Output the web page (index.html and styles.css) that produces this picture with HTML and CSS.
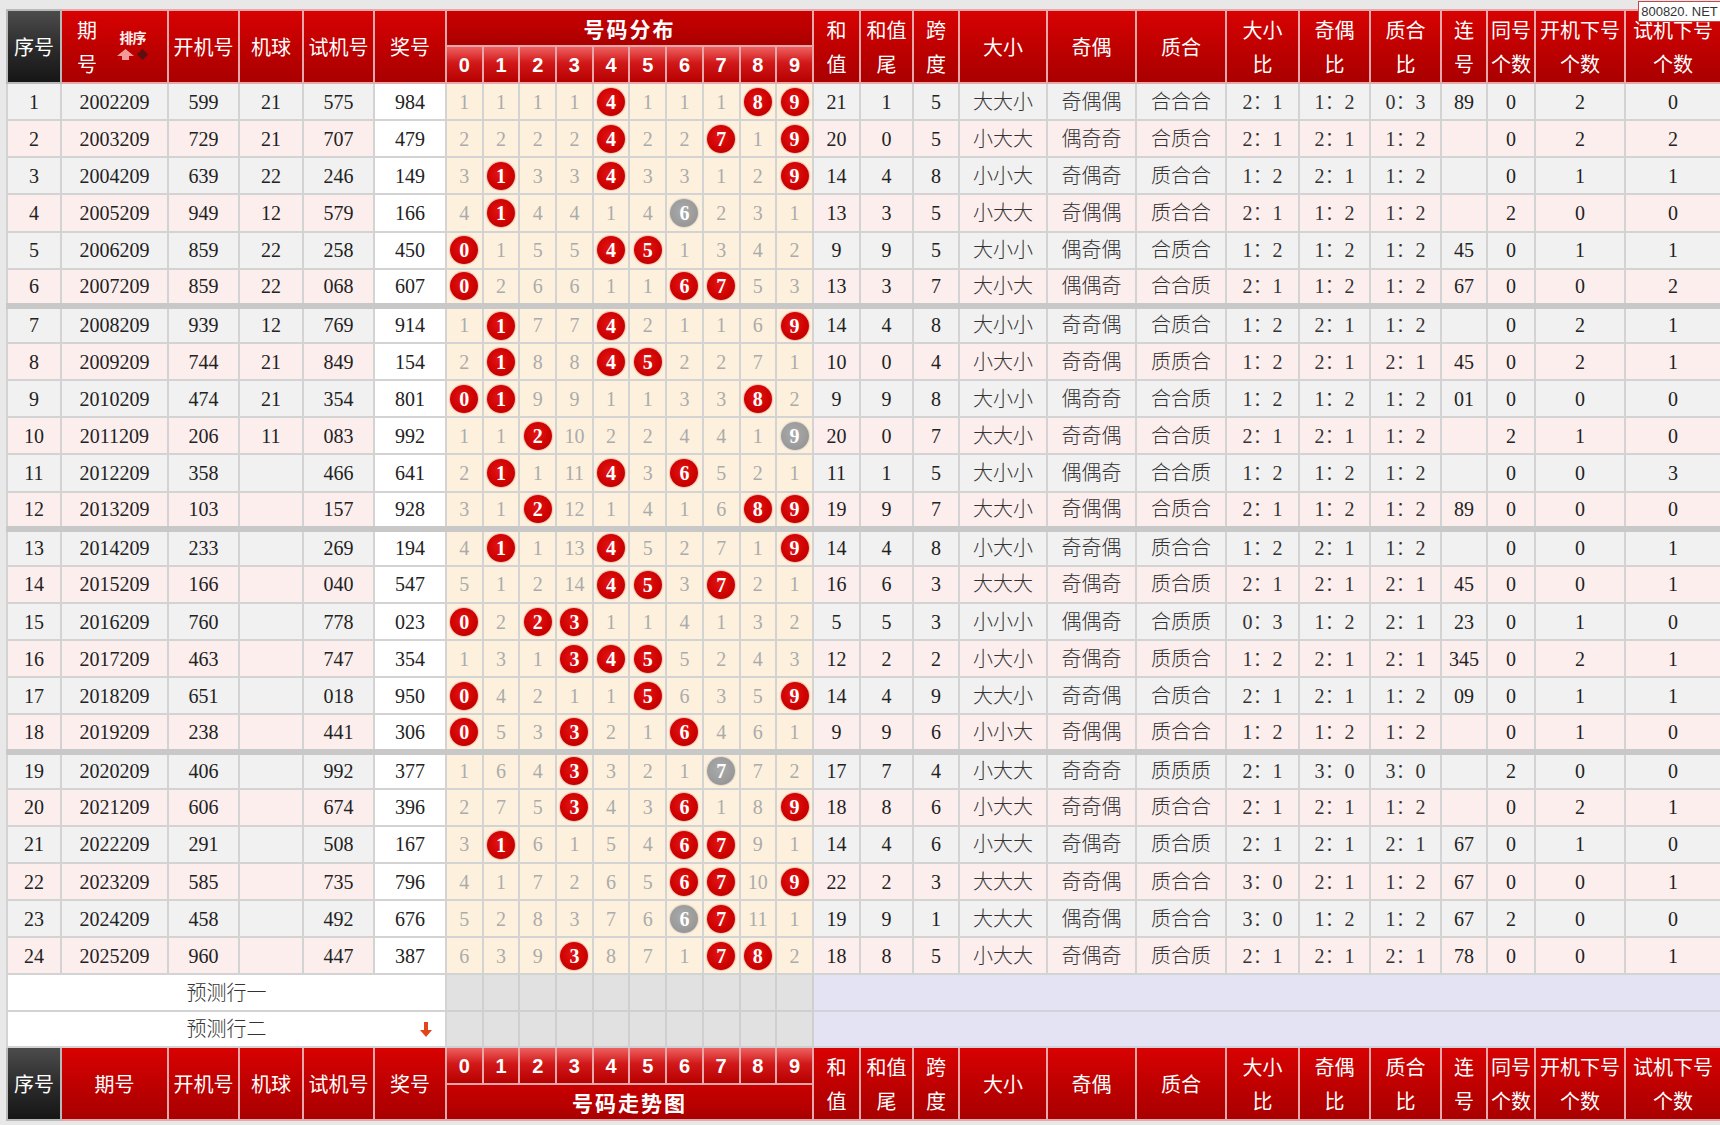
FILE: index.html
```html
<!DOCTYPE html>
<html lang="zh-CN">
<head>
<meta charset="utf-8">
<title>号码走势图</title>
<link rel="stylesheet" href="styles.css">
</head>
<body>
<div class="wm">800820. NET</div>
<table class="chart">
<colgroup>
<col style="width:54px"><col style="width:107px"><col style="width:71px"><col style="width:64px"><col style="width:71px"><col style="width:72px">
<col class="dc"><col class="dc"><col class="dc"><col class="dc"><col class="dc"><col class="dc"><col class="dc"><col class="dc"><col class="dc"><col class="dc">
<col style="width:47px"><col style="width:53px"><col style="width:46px"><col style="width:88px"><col style="width:89px"><col style="width:90px"><col style="width:73px"><col style="width:71px"><col style="width:71px"><col style="width:46px"><col style="width:48px"><col style="width:90px"><col style="width:96px">
</colgroup>
<thead>
<tr class="h1">
<th rowspan="2" class="dark">序号</th>
<th rowspan="2"><div class="qh"><span class="qt">期<br>号</span><span class="sort"><span class="st">排序</span><span class="si"><svg width="17" height="11" viewBox="0 0 17 11"><path d="M8.5 0L17 7h-5v4H5V7H0z" fill="#f29a9a"/></svg><svg width="11" height="11" viewBox="0 0 11 11"><path d="M5.5 0L11 5.5 5.5 11 0 5.5z" fill="#5a1010"/></svg></span></span></div></th>
<th rowspan="2">开机号</th>
<th rowspan="2">机球</th>
<th rowspan="2">试机号</th>
<th rowspan="2">奖号</th>
<th colspan="10" class="title">号码分布</th>
<th rowspan="2">和<br>值</th>
<th rowspan="2">和值<br>尾</th>
<th rowspan="2">跨<br>度</th>
<th rowspan="2">大小</th>
<th rowspan="2">奇偶</th>
<th rowspan="2">质合</th>
<th rowspan="2">大小<br>比</th>
<th rowspan="2">奇偶<br>比</th>
<th rowspan="2">质合<br>比</th>
<th rowspan="2">连<br>号</th>
<th rowspan="2">同号<br>个数</th>
<th rowspan="2">开机下号<br>个数</th>
<th rowspan="2">试机下号<br>个数</th>
</tr>
<tr class="h2">
<th class="num">0</th><th class="num">1</th><th class="num">2</th><th class="num">3</th><th class="num">4</th><th class="num">5</th><th class="num">6</th><th class="num">7</th><th class="num">8</th><th class="num">9</th>
</tr>
</thead>
<tbody>
<tr class="o"><td>1</td><td>2002209</td><td>599</td><td>21</td><td>575</td><td class="w">984</td><td class="d">1</td><td class="d">1</td><td class="d">1</td><td class="d">1</td><td class="d"><span class="b">4</span></td><td class="d">1</td><td class="d">1</td><td class="d">1</td><td class="d"><span class="b">8</span></td><td class="d"><span class="b">9</span></td><td>21</td><td>1</td><td>5</td><td class="c">大大小</td><td class="c">奇偶偶</td><td class="c">合合合</td><td class="c">2：1</td><td class="c">1：2</td><td class="c">0：3</td><td>89</td><td>0</td><td>2</td><td>0</td></tr>
<tr class="e"><td>2</td><td>2003209</td><td>729</td><td>21</td><td>707</td><td class="w">479</td><td class="d">2</td><td class="d">2</td><td class="d">2</td><td class="d">2</td><td class="d"><span class="b">4</span></td><td class="d">2</td><td class="d">2</td><td class="d"><span class="b">7</span></td><td class="d">1</td><td class="d"><span class="b">9</span></td><td>20</td><td>0</td><td>5</td><td class="c">小大大</td><td class="c">偶奇奇</td><td class="c">合质合</td><td class="c">2：1</td><td class="c">2：1</td><td class="c">1：2</td><td></td><td>0</td><td>2</td><td>2</td></tr>
<tr class="o"><td>3</td><td>2004209</td><td>639</td><td>22</td><td>246</td><td class="w">149</td><td class="d">3</td><td class="d"><span class="b">1</span></td><td class="d">3</td><td class="d">3</td><td class="d"><span class="b">4</span></td><td class="d">3</td><td class="d">3</td><td class="d">1</td><td class="d">2</td><td class="d"><span class="b">9</span></td><td>14</td><td>4</td><td>8</td><td class="c">小小大</td><td class="c">奇偶奇</td><td class="c">质合合</td><td class="c">1：2</td><td class="c">2：1</td><td class="c">1：2</td><td></td><td>0</td><td>1</td><td>1</td></tr>
<tr class="e"><td>4</td><td>2005209</td><td>949</td><td>12</td><td>579</td><td class="w">166</td><td class="d">4</td><td class="d"><span class="b">1</span></td><td class="d">4</td><td class="d">4</td><td class="d">1</td><td class="d">4</td><td class="d"><span class="b g">6</span></td><td class="d">2</td><td class="d">3</td><td class="d">1</td><td>13</td><td>3</td><td>5</td><td class="c">小大大</td><td class="c">奇偶偶</td><td class="c">质合合</td><td class="c">2：1</td><td class="c">1：2</td><td class="c">1：2</td><td></td><td>2</td><td>0</td><td>0</td></tr>
<tr class="o"><td>5</td><td>2006209</td><td>859</td><td>22</td><td>258</td><td class="w">450</td><td class="d"><span class="b">0</span></td><td class="d">1</td><td class="d">5</td><td class="d">5</td><td class="d"><span class="b">4</span></td><td class="d"><span class="b">5</span></td><td class="d">1</td><td class="d">3</td><td class="d">4</td><td class="d">2</td><td>9</td><td>9</td><td>5</td><td class="c">大小小</td><td class="c">偶奇偶</td><td class="c">合质合</td><td class="c">1：2</td><td class="c">1：2</td><td class="c">1：2</td><td>45</td><td>0</td><td>1</td><td>1</td></tr>
<tr class="e"><td>6</td><td>2007209</td><td>859</td><td>22</td><td>068</td><td class="w">607</td><td class="d"><span class="b">0</span></td><td class="d">2</td><td class="d">6</td><td class="d">6</td><td class="d">1</td><td class="d">1</td><td class="d"><span class="b">6</span></td><td class="d"><span class="b">7</span></td><td class="d">5</td><td class="d">3</td><td>13</td><td>3</td><td>7</td><td class="c">大小大</td><td class="c">偶偶奇</td><td class="c">合合质</td><td class="c">2：1</td><td class="c">1：2</td><td class="c">1：2</td><td>67</td><td>0</td><td>0</td><td>2</td></tr>
<tr class="o gs"><td>7</td><td>2008209</td><td>939</td><td>12</td><td>769</td><td class="w">914</td><td class="d">1</td><td class="d"><span class="b">1</span></td><td class="d">7</td><td class="d">7</td><td class="d"><span class="b">4</span></td><td class="d">2</td><td class="d">1</td><td class="d">1</td><td class="d">6</td><td class="d"><span class="b">9</span></td><td>14</td><td>4</td><td>8</td><td class="c">大小小</td><td class="c">奇奇偶</td><td class="c">合质合</td><td class="c">1：2</td><td class="c">2：1</td><td class="c">1：2</td><td></td><td>0</td><td>2</td><td>1</td></tr>
<tr class="e"><td>8</td><td>2009209</td><td>744</td><td>21</td><td>849</td><td class="w">154</td><td class="d">2</td><td class="d"><span class="b">1</span></td><td class="d">8</td><td class="d">8</td><td class="d"><span class="b">4</span></td><td class="d"><span class="b">5</span></td><td class="d">2</td><td class="d">2</td><td class="d">7</td><td class="d">1</td><td>10</td><td>0</td><td>4</td><td class="c">小大小</td><td class="c">奇奇偶</td><td class="c">质质合</td><td class="c">1：2</td><td class="c">2：1</td><td class="c">2：1</td><td>45</td><td>0</td><td>2</td><td>1</td></tr>
<tr class="o"><td>9</td><td>2010209</td><td>474</td><td>21</td><td>354</td><td class="w">801</td><td class="d"><span class="b">0</span></td><td class="d"><span class="b">1</span></td><td class="d">9</td><td class="d">9</td><td class="d">1</td><td class="d">1</td><td class="d">3</td><td class="d">3</td><td class="d"><span class="b">8</span></td><td class="d">2</td><td>9</td><td>9</td><td>8</td><td class="c">大小小</td><td class="c">偶奇奇</td><td class="c">合合质</td><td class="c">1：2</td><td class="c">1：2</td><td class="c">1：2</td><td>01</td><td>0</td><td>0</td><td>0</td></tr>
<tr class="e"><td>10</td><td>2011209</td><td>206</td><td>11</td><td>083</td><td class="w">992</td><td class="d">1</td><td class="d">1</td><td class="d"><span class="b">2</span></td><td class="d">10</td><td class="d">2</td><td class="d">2</td><td class="d">4</td><td class="d">4</td><td class="d">1</td><td class="d"><span class="b g">9</span></td><td>20</td><td>0</td><td>7</td><td class="c">大大小</td><td class="c">奇奇偶</td><td class="c">合合质</td><td class="c">2：1</td><td class="c">2：1</td><td class="c">1：2</td><td></td><td>2</td><td>1</td><td>0</td></tr>
<tr class="o"><td>11</td><td>2012209</td><td>358</td><td></td><td>466</td><td class="w">641</td><td class="d">2</td><td class="d"><span class="b">1</span></td><td class="d">1</td><td class="d">11</td><td class="d"><span class="b">4</span></td><td class="d">3</td><td class="d"><span class="b">6</span></td><td class="d">5</td><td class="d">2</td><td class="d">1</td><td>11</td><td>1</td><td>5</td><td class="c">大小小</td><td class="c">偶偶奇</td><td class="c">合合质</td><td class="c">1：2</td><td class="c">1：2</td><td class="c">1：2</td><td></td><td>0</td><td>0</td><td>3</td></tr>
<tr class="e"><td>12</td><td>2013209</td><td>103</td><td></td><td>157</td><td class="w">928</td><td class="d">3</td><td class="d">1</td><td class="d"><span class="b">2</span></td><td class="d">12</td><td class="d">1</td><td class="d">4</td><td class="d">1</td><td class="d">6</td><td class="d"><span class="b">8</span></td><td class="d"><span class="b">9</span></td><td>19</td><td>9</td><td>7</td><td class="c">大大小</td><td class="c">奇偶偶</td><td class="c">合质合</td><td class="c">2：1</td><td class="c">1：2</td><td class="c">1：2</td><td>89</td><td>0</td><td>0</td><td>0</td></tr>
<tr class="o gs"><td>13</td><td>2014209</td><td>233</td><td></td><td>269</td><td class="w">194</td><td class="d">4</td><td class="d"><span class="b">1</span></td><td class="d">1</td><td class="d">13</td><td class="d"><span class="b">4</span></td><td class="d">5</td><td class="d">2</td><td class="d">7</td><td class="d">1</td><td class="d"><span class="b">9</span></td><td>14</td><td>4</td><td>8</td><td class="c">小大小</td><td class="c">奇奇偶</td><td class="c">质合合</td><td class="c">1：2</td><td class="c">2：1</td><td class="c">1：2</td><td></td><td>0</td><td>0</td><td>1</td></tr>
<tr class="e"><td>14</td><td>2015209</td><td>166</td><td></td><td>040</td><td class="w">547</td><td class="d">5</td><td class="d">1</td><td class="d">2</td><td class="d">14</td><td class="d"><span class="b">4</span></td><td class="d"><span class="b">5</span></td><td class="d">3</td><td class="d"><span class="b">7</span></td><td class="d">2</td><td class="d">1</td><td>16</td><td>6</td><td>3</td><td class="c">大大大</td><td class="c">奇偶奇</td><td class="c">质合质</td><td class="c">2：1</td><td class="c">2：1</td><td class="c">2：1</td><td>45</td><td>0</td><td>0</td><td>1</td></tr>
<tr class="o"><td>15</td><td>2016209</td><td>760</td><td></td><td>778</td><td class="w">023</td><td class="d"><span class="b">0</span></td><td class="d">2</td><td class="d"><span class="b">2</span></td><td class="d"><span class="b">3</span></td><td class="d">1</td><td class="d">1</td><td class="d">4</td><td class="d">1</td><td class="d">3</td><td class="d">2</td><td>5</td><td>5</td><td>3</td><td class="c">小小小</td><td class="c">偶偶奇</td><td class="c">合质质</td><td class="c">0：3</td><td class="c">1：2</td><td class="c">2：1</td><td>23</td><td>0</td><td>1</td><td>0</td></tr>
<tr class="e"><td>16</td><td>2017209</td><td>463</td><td></td><td>747</td><td class="w">354</td><td class="d">1</td><td class="d">3</td><td class="d">1</td><td class="d"><span class="b">3</span></td><td class="d"><span class="b">4</span></td><td class="d"><span class="b">5</span></td><td class="d">5</td><td class="d">2</td><td class="d">4</td><td class="d">3</td><td>12</td><td>2</td><td>2</td><td class="c">小大小</td><td class="c">奇偶奇</td><td class="c">质质合</td><td class="c">1：2</td><td class="c">2：1</td><td class="c">2：1</td><td>345</td><td>0</td><td>2</td><td>1</td></tr>
<tr class="o"><td>17</td><td>2018209</td><td>651</td><td></td><td>018</td><td class="w">950</td><td class="d"><span class="b">0</span></td><td class="d">4</td><td class="d">2</td><td class="d">1</td><td class="d">1</td><td class="d"><span class="b">5</span></td><td class="d">6</td><td class="d">3</td><td class="d">5</td><td class="d"><span class="b">9</span></td><td>14</td><td>4</td><td>9</td><td class="c">大大小</td><td class="c">奇奇偶</td><td class="c">合质合</td><td class="c">2：1</td><td class="c">2：1</td><td class="c">1：2</td><td>09</td><td>0</td><td>1</td><td>1</td></tr>
<tr class="e"><td>18</td><td>2019209</td><td>238</td><td></td><td>441</td><td class="w">306</td><td class="d"><span class="b">0</span></td><td class="d">5</td><td class="d">3</td><td class="d"><span class="b">3</span></td><td class="d">2</td><td class="d">1</td><td class="d"><span class="b">6</span></td><td class="d">4</td><td class="d">6</td><td class="d">1</td><td>9</td><td>9</td><td>6</td><td class="c">小小大</td><td class="c">奇偶偶</td><td class="c">质合合</td><td class="c">1：2</td><td class="c">1：2</td><td class="c">1：2</td><td></td><td>0</td><td>1</td><td>0</td></tr>
<tr class="o gs"><td>19</td><td>2020209</td><td>406</td><td></td><td>992</td><td class="w">377</td><td class="d">1</td><td class="d">6</td><td class="d">4</td><td class="d"><span class="b">3</span></td><td class="d">3</td><td class="d">2</td><td class="d">1</td><td class="d"><span class="b g">7</span></td><td class="d">7</td><td class="d">2</td><td>17</td><td>7</td><td>4</td><td class="c">小大大</td><td class="c">奇奇奇</td><td class="c">质质质</td><td class="c">2：1</td><td class="c">3：0</td><td class="c">3：0</td><td></td><td>2</td><td>0</td><td>0</td></tr>
<tr class="e"><td>20</td><td>2021209</td><td>606</td><td></td><td>674</td><td class="w">396</td><td class="d">2</td><td class="d">7</td><td class="d">5</td><td class="d"><span class="b">3</span></td><td class="d">4</td><td class="d">3</td><td class="d"><span class="b">6</span></td><td class="d">1</td><td class="d">8</td><td class="d"><span class="b">9</span></td><td>18</td><td>8</td><td>6</td><td class="c">小大大</td><td class="c">奇奇偶</td><td class="c">质合合</td><td class="c">2：1</td><td class="c">2：1</td><td class="c">1：2</td><td></td><td>0</td><td>2</td><td>1</td></tr>
<tr class="o"><td>21</td><td>2022209</td><td>291</td><td></td><td>508</td><td class="w">167</td><td class="d">3</td><td class="d"><span class="b">1</span></td><td class="d">6</td><td class="d">1</td><td class="d">5</td><td class="d">4</td><td class="d"><span class="b">6</span></td><td class="d"><span class="b">7</span></td><td class="d">9</td><td class="d">1</td><td>14</td><td>4</td><td>6</td><td class="c">小大大</td><td class="c">奇偶奇</td><td class="c">质合质</td><td class="c">2：1</td><td class="c">2：1</td><td class="c">2：1</td><td>67</td><td>0</td><td>1</td><td>0</td></tr>
<tr class="e"><td>22</td><td>2023209</td><td>585</td><td></td><td>735</td><td class="w">796</td><td class="d">4</td><td class="d">1</td><td class="d">7</td><td class="d">2</td><td class="d">6</td><td class="d">5</td><td class="d"><span class="b">6</span></td><td class="d"><span class="b">7</span></td><td class="d">10</td><td class="d"><span class="b">9</span></td><td>22</td><td>2</td><td>3</td><td class="c">大大大</td><td class="c">奇奇偶</td><td class="c">质合合</td><td class="c">3：0</td><td class="c">2：1</td><td class="c">1：2</td><td>67</td><td>0</td><td>0</td><td>1</td></tr>
<tr class="o"><td>23</td><td>2024209</td><td>458</td><td></td><td>492</td><td class="w">676</td><td class="d">5</td><td class="d">2</td><td class="d">8</td><td class="d">3</td><td class="d">7</td><td class="d">6</td><td class="d"><span class="b g">6</span></td><td class="d"><span class="b">7</span></td><td class="d">11</td><td class="d">1</td><td>19</td><td>9</td><td>1</td><td class="c">大大大</td><td class="c">偶奇偶</td><td class="c">质合合</td><td class="c">3：0</td><td class="c">1：2</td><td class="c">1：2</td><td>67</td><td>2</td><td>0</td><td>0</td></tr>
<tr class="e"><td>24</td><td>2025209</td><td>960</td><td></td><td>447</td><td class="w">387</td><td class="d">6</td><td class="d">3</td><td class="d">9</td><td class="d"><span class="b">3</span></td><td class="d">8</td><td class="d">7</td><td class="d">1</td><td class="d"><span class="b">7</span></td><td class="d"><span class="b">8</span></td><td class="d">2</td><td>18</td><td>8</td><td>5</td><td class="c">小大大</td><td class="c">奇偶奇</td><td class="c">质合质</td><td class="c">2：1</td><td class="c">2：1</td><td class="c">2：1</td><td>78</td><td>0</td><td>0</td><td>1</td></tr>
<tr class="pred"><td colspan="6" class="pl">预测行一</td><td class="pd"></td><td class="pd"></td><td class="pd"></td><td class="pd"></td><td class="pd"></td><td class="pd"></td><td class="pd"></td><td class="pd"></td><td class="pd"></td><td class="pd"></td><td colspan="13" class="pr"></td></tr>
<tr class="pred"><td colspan="6" class="pl">预测行二<svg class="arrow" width="12" height="15" viewBox="0 0 12 15"><path d="M4 0h4v8h4L6 15 0 8h4z" fill="#e0461c"/></svg></td><td class="pd"></td><td class="pd"></td><td class="pd"></td><td class="pd"></td><td class="pd"></td><td class="pd"></td><td class="pd"></td><td class="pd"></td><td class="pd"></td><td class="pd"></td><td colspan="13" class="pr"></td></tr>
</tbody>
<tfoot>
<tr class="f1">
<th rowspan="2" class="dark">序号</th>
<th rowspan="2">期号</th>
<th rowspan="2">开机号</th>
<th rowspan="2">机球</th>
<th rowspan="2">试机号</th>
<th rowspan="2">奖号</th>
<th class="num">0</th><th class="num">1</th><th class="num">2</th><th class="num">3</th><th class="num">4</th><th class="num">5</th><th class="num">6</th><th class="num">7</th><th class="num">8</th><th class="num">9</th>
<th rowspan="2">和<br>值</th>
<th rowspan="2">和值<br>尾</th>
<th rowspan="2">跨<br>度</th>
<th rowspan="2">大小</th>
<th rowspan="2">奇偶</th>
<th rowspan="2">质合</th>
<th rowspan="2">大小<br>比</th>
<th rowspan="2">奇偶<br>比</th>
<th rowspan="2">质合<br>比</th>
<th rowspan="2">连<br>号</th>
<th rowspan="2">同号<br>个数</th>
<th rowspan="2">开机下号<br>个数</th>
<th rowspan="2">试机下号<br>个数</th>
</tr>
<tr class="f2">
<th colspan="10" class="title">号码走势图</th>
</tr>
</tfoot>
</table>
</body>
</html>
```
FILE: styles.css
```css
* { box-sizing: border-box; }
html, body { margin: 0; }
body {
  width: 1720px;
  height: 1125px;
  overflow: hidden;
  position: relative;
  background: #e8e8e8;
  padding: 9px 0 0 6px;
  font-family: "Liberation Serif", "Noto Sans CJK SC", serif;
  color: #222;
}

.wm {
  position: absolute;
  top: 1px;
  right: 0;
  width: 82px;
  height: 21px;
  background: #fff;
  border: 1px solid #c94444;
  border-right: 0;
  font: 13px/19px "Liberation Sans", sans-serif;
  white-space: nowrap;
  color: #333;
  text-align: center;
  z-index: 2;
}

.chart {
  border-collapse: collapse;
  table-layout: fixed;
  width: 1714px;
}
.chart col.dc { width: 36.7px; }

.chart td, .chart th {
  padding: 0;
  text-align: center;
  vertical-align: middle;
  overflow: hidden;
  white-space: nowrap;
}

/* header & footer */
.chart th {
  border: 2px solid #e6a8a8;
  color: #fff;
  font-family: "Noto Sans CJK SC", sans-serif;
  font-weight: 400;
  font-size: 20px;
  line-height: 34px;
  background: linear-gradient(#d80202, #bd0000 55%, #a90000);
}
.chart th.dark {
  background: linear-gradient(#4c4c4c, #2a2a2a 55%, #161616);
  border-color: #b9b9b9;
}
.chart th.title {
  font-weight: 700;
  font-size: 21px;
  letter-spacing: 2px;
  background: linear-gradient(#c80000, #b80000 60%, #a80000);
}
.chart th.num {
  font-family: "Liberation Sans", sans-serif;
  font-weight: 700;
  font-size: 20px;
  background: linear-gradient(#ee6060, #d21818 45%, #b60000);
}
.h1 { height: 36px; }
.h2 { height: 37px; }
.f1 { height: 37px; }
.f2 { height: 35px; }

.qh {
  display: flex;
  align-items: center;
  justify-content: center;
  gap: 20px;
  padding-right: 4px;
}
.qt { line-height: 34px; }
.sort {
  display: flex;
  flex-direction: column;
  align-items: center;
  gap: 4px;
  margin-top: -4px;
}
.st {
  font-size: 14px;
  line-height: 16px;
  font-weight: 700;
  color: #fff0f0;
  letter-spacing: -1px;
}
.si { display: flex; align-items: center; gap: 3px; }
.si svg { display: block; }

/* data */
.chart td {
  border: 2px solid #d3d3d3;
  font-size: 20px;
  line-height: 24px;
}
tbody tr { height: 37.15px; }
.o td { background: #f1f1f1; }
.e td { background: #fdeeee; }
.chart td.w { background: #fff; }
.chart td.d { background: #fdf1de; color: #ababab; }
.chart td.c { font-family: "Liberation Serif", "Noto Sans CJK SC", serif; font-weight: 300; color: #333; }
.gs td { border-top: 6px solid #c8c8c8; }

.b {
  display: inline-block;
  width: 28px;
  height: 28px;
  border-radius: 50%;
  background: radial-gradient(circle at 45% 42%, #e21414 0%, #cf0202 55%, #a80000 100%);
  box-shadow: 0 0 1px 1px rgba(200, 40, 40, 0.25);
  color: #fff;
  font: 700 20px/28px "Liberation Serif", serif;
  vertical-align: middle;
}
.b.g {
  background: radial-gradient(circle at 45% 42%, #aaaaaa 0%, #9c9c9c 55%, #8c8c8c 100%);
  box-shadow: 0 0 1px 1px rgba(150, 150, 150, 0.25);
}

/* prediction rows */
tbody tr.pred { height: 36.5px; }
.chart td.pl {
  background: #fff;
  color: #333;
  position: relative;
  font-family: "Liberation Serif", "Noto Sans CJK SC", serif;
  font-weight: 300;
}
.arrow { position: absolute; right: 13px; top: 10px; }
.chart td.pd { background: #e1e1e1; border-color: #cfcfcf; }
.chart td.pr { background: #e3e3f3; border-color: #d2d2dc; }
```
